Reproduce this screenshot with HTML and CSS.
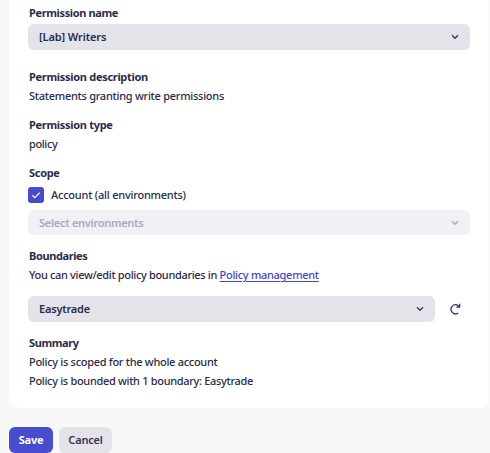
FILE: index.html
```
<!DOCTYPE html>
<html lang="en">
<head>
<meta charset="utf-8">
<title>Permission</title>
<link rel="stylesheet" href="styles.css">
</head>
<body>
<main class="card">
  <section class="field name">
    <h2><span class="t-name">Permission name</span></h2>
    <div class="select"><span class="t-lab">[Lab] Writers</span><svg class="chevron" viewBox="0 0 8 6"><path d="M1 1.3 4 4.3 7 1.3"/></svg></div>
  </section>
  <section class="field description">
    <h2><span class="t-desc">Permission description</span></h2>
    <p><span class="t-statements">Statements granting write permissions</span></p>
  </section>
  <section class="field type">
    <h2><span class="t-type">Permission type</span></h2>
    <p><span class="t-policy">policy</span></p>
  </section>
  <section class="field scope">
    <h2><span class="t-scope">Scope</span></h2>
    <div class="check-row"><span class="checkbox"><svg viewBox="0 0 16 16"><path d="M4.3 8.3 6.8 10.6 11.7 5.6"/></svg></span><span class="t-account">Account (all environments)</span></div>
    <div class="select disabled"><span class="t-select">Select environments</span><svg class="chevron" viewBox="0 0 8 6"><path d="M1 1.3 4 4.3 7 1.3"/></svg></div>
  </section>
  <section class="field boundaries">
    <h2><span class="t-bound">Boundaries</span></h2>
    <p><span class="t-view">You can view/edit policy boundaries in </span><a class="t-link" href="#">Policy management</a></p>
    <div class="boundary-row">
      <div class="select"><span class="t-easy">Easytrade</span><svg class="chevron" viewBox="0 0 8 6"><path d="M1 1.3 4 4.3 7 1.3"/></svg></div>
      <svg class="refresh" viewBox="0 0 12 12"><path d="M9.3 9.9A4.5 4.5 0 1 1 9.2 2.7L10.3 3.8"/><path d="M10.6.8V4.1H7.3"/></svg>
    </div>
  </section>
  <section class="field summary">
    <h2><span class="t-summary">Summary</span></h2>
    <p><span class="t-whole">Policy is scoped for the whole account</span></p>
    <p><span class="t-with">Policy is bounded with 1 boundary: Easytrade</span></p>
  </section>
</main>
<footer class="actions">
  <button class="save"><span class="t-save">Save</span></button>
  <button class="cancel"><span class="t-cancel">Cancel</span></button>
</footer>
</body>
</html>
```
FILE: styles.css
```
* { box-sizing: border-box; }
body {
  margin: 0;
  height: 453px;
  overflow: hidden;
  background: #f8f8f8;
  color: #2b2b4b;
  font: 500 11px/19px "Noto Sans", sans-serif;
  letter-spacing: -0.3px;
  white-space: nowrap;
}
h2, p { margin: 0; height: 19px; font-size: inherit; line-height: inherit; }
h2 { font-weight: 700; padding-left: 1px; }
p { padding-left: 1px; white-space: pre; }
.card {
  width: 480px;
  height: 408px;
  margin-left: 9px;
  padding: 3px 19px 0;
  background: #fff;
  border-radius: 0 0 10px 10px;
}
.description { margin-top: 17px; }
.type, .scope { margin-top: 10px; }
.boundaries, .summary { margin-top: 11px; }
.select {
  display: flex;
  align-items: center;
  justify-content: space-between;
  height: 26px;
  padding: 0 11px;
  background: #e3e3e9;
  border-radius: 6px;
  font-weight: 600;
}
.select span { padding-bottom: 2px; }
.select.disabled span { padding-bottom: 0; }
.name .select { margin-top: 2px; }
.chevron {
  width: 8px;
  height: 6px;
  fill: none;
  stroke: #3b3a5d;
  stroke-width: 1.4;
}
.check-row {
  display: flex;
  align-items: center;
  gap: 7px;
  height: 16px;
  margin-top: 5px;
}
.checkbox {
  width: 16px;
  height: 16px;
  background: #484ccb;
  border-radius: 3px;
}
.checkbox svg { display: block; fill: none; stroke: #fff; stroke-width: 1.2; }
.disabled {
  height: 25px;
  margin-top: 7px;
  background: #f0f0f5;
  color: #a9a9bf;
}
.disabled .chevron { stroke: #aaa9bf; }
a { color: #4446c9; text-underline-offset: 2px; }
.boundary-row { display: flex; align-items: center; margin-top: 12px; }
.boundary-row .select { width: 407px; }
.refresh {
  width: 12px;
  height: 12px;
  margin-left: 14px;
  fill: none;
  stroke: #34345a;
  stroke-width: 1.3;
}
.actions { display: flex; gap: 6px; margin: 19px 0 0 9px; }
button {
  height: 26px;
  padding: 0 0 2px;
  border: 0;
  border-radius: 6px;
  font: inherit;
}
.save { width: 44px; background: #484ccf; color: #fff; font-weight: 700; }
.cancel { width: 53px; background: #e3e3e9; color: #34345a; font-weight: 600; }

/* Optical tracking */
.t-name { letter-spacing: -0.37px; }
.t-statements { letter-spacing: -0.27px; }
.t-policy { letter-spacing: -0.4px; }
.t-account { letter-spacing: -0.23px; padding-bottom: 1px; }
.t-select { letter-spacing: -0.28px; }
.t-bound, .t-summary { letter-spacing: -0.4px; }
.t-view { letter-spacing: -0.34px; }
.t-easy { letter-spacing: -0.2px; }
.t-with { letter-spacing: -0.32px; }
.t-lab { letter-spacing: -0.12px; }
.t-save, .t-cancel { letter-spacing: -0.2px; }
```
